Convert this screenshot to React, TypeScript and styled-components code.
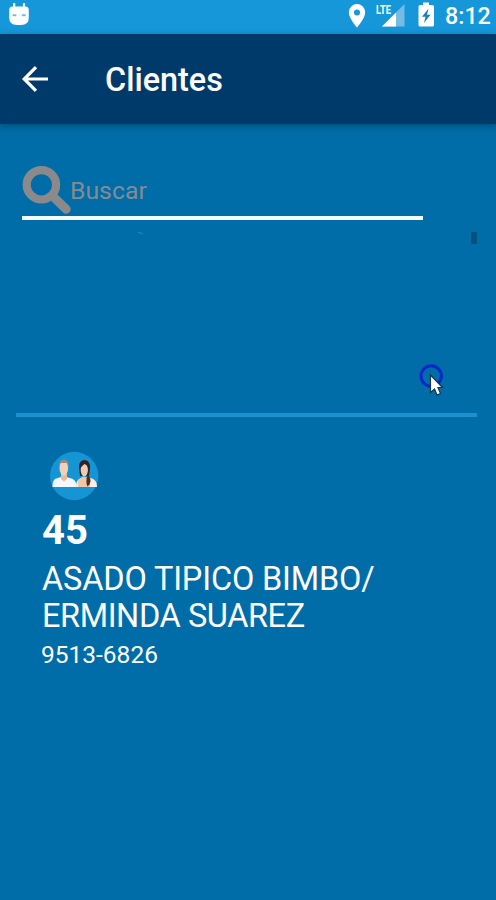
import React from "react";
import styled, { createGlobalStyle } from "styled-components";

const GlobalStyle = createGlobalStyle`
  * { box-sizing: border-box; }
  body { margin: 0; background: #006ca8; font-family: Roboto, sans-serif; }
`;

const Screen = styled.div`
  position: relative;
  width: 496px;
  height: 900px;
  overflow: hidden;
  display: flex;
  flex-direction: column;
  background: #006ca8;
  color: #fff;
`;

const StatusBar = styled.header`
  flex: none;
  height: 34px;
  display: flex;
  align-items: flex-start;
  justify-content: space-between;
  background: #1597d9;
`;

const Clock = styled.time`
  width: 46px;
  margin: 2px 0 0 9px;
  font-size: 23.3px;
  line-height: 28px;
  font-weight: 500;
  white-space: nowrap;
`;

const StatusIcons = styled.div`
  display: flex;
  align-items: flex-start;
  padding-right: 5px;
`;

const AppBar = styled.nav`
  flex: none;
  height: 90px;
  display: flex;
  align-items: center;
  padding-left: 21px;
  background: #003a6b;
  box-shadow: 0 2px 6px rgba(0, 45, 70, 0.5);
`;

const BackButton = styled.button`
  display: flex;
  border: 0;
  padding: 0;
  background: none;
  color: inherit;
`;

const Title = styled.h1`
  margin: 2px 0 0 56px;
  font-size: 32.4px;
  line-height: 38px;
  font-weight: 500;
`;

const SearchField = styled.label`
  flex: none;
  display: flex;
  align-items: flex-start;
  width: 401px;
  height: 56px;
  margin: 40px 0 0 22px;
  border-bottom: 4px solid #f4fcff;
  color: #8b8989;
`;

const SearchInput = styled.input`
  width: 330px;
  height: 32px;
  margin: 10px 0 0 -1px;
  padding: 0;
  border: 0;
  outline: 0;
  background: none;
  font: 400 24.8px/30px Roboto, sans-serif;
  color: #fff;
  &::placeholder { color: #858b91; opacity: 1; }
`;

const ListStart = styled.div`
  flex: none;
  height: 193px;
  padding: 12px 19px 0 137px;
  display: flex;
  justify-content: space-between;
  align-items: flex-start;
`;

const ScrollThumb = styled.i`
  width: 6px;
  height: 12px;
  background: #06527d;
`;

const Divider = styled.hr`
  flex: none;
  width: 461px;
  height: 4px;
  margin: 0 0 0 16px;
  border: 0;
  background: #1b91cf;
`;

const ClientCard = styled.article`
  display: flex;
  flex-direction: column;
  padding: 33px 42px 0;
`;

const ClientNumber = styled.strong`
  margin-top: 6px;
  font-size: 40px;
  line-height: 48px;
  font-weight: 700;
`;

const ClientName = styled.p`
  margin: 6px 0 0;
  font-size: 32.5px;
  line-height: 37px;
`;

const NameLine = styled.span<{ $tracking: number }>`
  display: block;
  letter-spacing: ${({ $tracking }) => $tracking}px;
  white-space: nowrap;
`;

const Phone = styled.span`
  margin: 5px 0 0 -1px;
  font-size: 24.5px;
  line-height: 30px;
`;

const Pointer = styled.svg`
  position: absolute;
  left: 416px;
  top: 361px;
`;

const RobotIcon = () => (
  <svg width="40" height="34" viewBox="0 0 40 34">
    <path d="M14.2 3v5M24 3v5" stroke="#e9f8ff" strokeWidth="2.2" />
    <path d="M9.200 10Q9.200 6.500 12.500 6.500H25.500Q28.800 6.500 28.800 10V18Q28.800 25 21 25H17Q9.200 25 9.200 18Z" fill="#fbffff" />
    <path d="M13.500 15.300h2M22.800 15.300h2" stroke="#74bbdd" strokeWidth="2" strokeLinecap="round" />
  </svg>
);

const LocationIcon = () => (
  <svg width="18" height="34" viewBox="348 0 18 34">
    <path fillRule="evenodd" d="M357 4a8.2 8.2 0 0 0-8.2 8.2C348.8 18.5 357 27.5 357 27.5s8.2-9 8.2-15.3A8.2 8.2 0 0 0 357 4Zm0 5.4a3 3 0 1 1 0 6 3 3 0 0 1 0-6Z" fill="#fff" />
  </svg>
);

const SignalIcon = () => (
  <svg width="50" height="34" viewBox="366 0 50 34">
    <path d="M404.500 4V26.500H382Z" fill="#75bce4" />
    <path d="M396 12.500V26.500H382Z" fill="#fff" />
    <text x="376" y="13.500" fill="#fff" fontFamily="Roboto, sans-serif" fontSize="13.500" fontWeight="700" textLength="15" lengthAdjust="spacingAndGlyphs">LTE</text>
  </svg>
);

const BatteryIcon = () => (
  <svg width="20" height="34" viewBox="416 0 20 34">
    <path d="M423 2.5h6V5h3.500q1.500 0 1.500 1.500v18.500q0 1.500-1.500 1.500h-12.500q-1.500 0-1.500-1.500V6.500Q418.500 5 420 5h3Z" fill="#fff" />
    <path d="M428.500 8.500 422 16.800h3.500L424 23l6.500-8.200H427Z" fill="#1683bd" />
  </svg>
);

const ArrowIcon = () => (
  <svg width="28" height="28" viewBox="0 0 28 28" fill="none" stroke="#fff" strokeWidth="3.200">
    <path d="M27 14H3M15 2.200 3.200 14 15 25.800" />
  </svg>
);

const SearchIcon = () => (
  <svg width="49" height="51" viewBox="0 0 49 51" fill="none" stroke="currentColor">
    <circle cx="19.400" cy="20.800" r="14.700" strokeWidth="8.200" />
    <path d="m31 32.500 13.200 12.700" strokeWidth="9" strokeLinecap="round" />
  </svg>
);

const ClientsAvatar = () => (
  <svg width="66" height="51" viewBox="42 450 66 51">
    <circle cx="74.200" cy="476" r="24.200" fill="#1695d5" />
    <path d="M52.500 487c0-7 2-8.500 7-9.500l4-2 5 2.300c5.500 1 8 3 8 9.200Z" fill="#f4f8fb" />
    <path d="M61 474h6v5l-3 2.500-3-2.500Z" fill="#e7ba9c" />
    <ellipse cx="63.800" cy="468" rx="4.300" ry="7.500" fill="#f2d1b8" />
    <path d="M59 467c-1-10 10.500-10 9.600 0l-1.400-4h-6.500Z" fill="#a48978" />
    <path d="M76 487c0-6.500 2.500-8.500 7-9.500h5c6 1 9 3 9 9.500Z" fill="#f8eee8" />
    <path d="M78 487V480l5-3.500 3 1.500 4-1v10Z" fill="#efc8a8" />
    <path d="M79.200 469c-2-12 12.500-12 10.800 0l-1 7h-9Z" fill="#302429" />
    <ellipse cx="84.300" cy="470" rx="3.600" ry="6.500" fill="#f1cbae" />
    <path d="M80 468q0-7 4.500-7t5 7q-2-3-5-4Z" fill="#302429" />
    <path d="M88 474q4 6 1.500 10.500l-2 2q-2.500-5 .5-12.500Z" fill="#542b20" />
  </svg>
);

export default function App() {
  return (
    <Screen>
      <GlobalStyle />
      <StatusBar>
        <RobotIcon />
        <StatusIcons>
          <LocationIcon />
          <SignalIcon />
          <BatteryIcon />
          <Clock>8:12</Clock>
        </StatusIcons>
      </StatusBar>
      <AppBar>
        <BackButton aria-label="Volver"><ArrowIcon /></BackButton>
        <Title>Clientes</Title>
      </AppBar>
      <SearchField>
        <SearchIcon />
        <SearchInput placeholder="Buscar" />
      </SearchField>
      <ListStart>
        <svg width="8" height="4" viewBox="0 0 8 4"><path d="m1 0 5 2" stroke="#258bc3" strokeWidth="1" /></svg>
        <ScrollThumb />
      </ListStart>
      <Divider />
      <ClientCard>
        <ClientsAvatar />
        <ClientNumber>45</ClientNumber>
        <ClientName>
          <NameLine $tracking={-0.15}>ASADO TIPICO BIMBO/</NameLine>
          <NameLine $tracking={-0.4}>ERMINDA SUAREZ</NameLine>
        </ClientName>
        <Phone>9513-6826</Phone>
      </ClientCard>
      <Pointer width="32" height="38" viewBox="416 361 32 38">
        <circle cx="431.200" cy="376" r="10.200" fill="none" stroke="#0527cc" strokeWidth="3" />
        <path d="M430.500 375v17.500l4-3.500 2.500 6 3.500-1.500-2.500-6h4.500Z" fill="#fff" stroke="#17364d" strokeWidth="1.200" />
      </Pointer>
    </Screen>
  );
}
